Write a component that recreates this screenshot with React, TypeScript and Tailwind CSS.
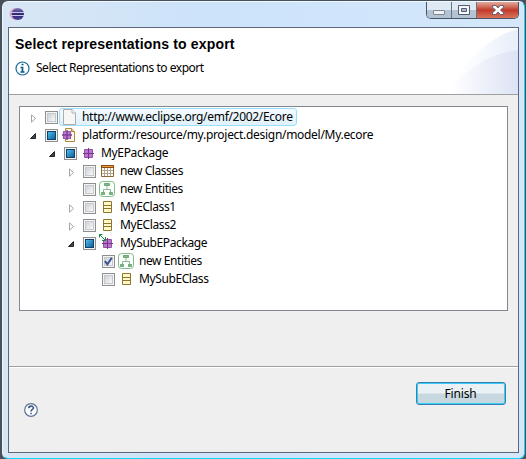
import React from "react";

type Kind = "file" | "model" | "package" | "table" | "diagram" | "class" | "subpackage";
type Check = "off" | "on" | "mixed";
type Arrow = "closed" | "open" | "none";

interface Node {
  label: string;
  indent: string;
  arrow: Arrow;
  check: Check;
  icon: Kind;
  spacing: string;
  selected?: boolean;
}

const nodes: Node[] = [
  { label: "http://www.eclipse.org/emf/2002/Ecore", indent: "pl-[8px]", arrow: "closed", check: "off", icon: "file", spacing: "tracking-[-0.31px]", selected: true },
  { label: "platform:/resource/my.project.design/model/My.ecore", indent: "pl-[8px]", arrow: "open", check: "mixed", icon: "model", spacing: "tracking-[-0.3px]" },
  { label: "MyEPackage", indent: "pl-[27px]", arrow: "open", check: "mixed", icon: "package", spacing: "tracking-[-0.35px]" },
  { label: "new Classes", indent: "pl-[46px]", arrow: "closed", check: "off", icon: "table", spacing: "tracking-[-0.45px]" },
  { label: "new Entities", indent: "pl-[46px]", arrow: "none", check: "off", icon: "diagram", spacing: "tracking-[-0.42px]" },
  { label: "MyEClass1", indent: "pl-[46px]", arrow: "closed", check: "off", icon: "class", spacing: "tracking-[-0.42px]" },
  { label: "MyEClass2", indent: "pl-[46px]", arrow: "closed", check: "off", icon: "class", spacing: "tracking-[-0.38px]" },
  { label: "MySubEPackage", indent: "pl-[46px]", arrow: "open", check: "mixed", icon: "subpackage", spacing: "tracking-[-0.38px]" },
  { label: "new Entities", indent: "pl-[65px]", arrow: "none", check: "on", icon: "diagram", spacing: "tracking-[-0.42px]" },
  { label: "MySubEClass", indent: "pl-[65px]", arrow: "none", check: "off", icon: "class", spacing: "tracking-[-0.4px]" },
];

function Expander({ type }: { type: Arrow }) {
  return (
    <svg className="mt-[3px] h-[9px] w-[9px] shrink-0" viewBox="0 0 9 9">
      {type === "closed" && <path d="M3.5.8v7.4L7.5 4.500z" fill="#fff" stroke="#a6a6a6" />}
      {type === "open" && <path d="M2.500 6.500h5V1.500z" fill="#444" stroke="#262626" />}
    </svg>
  );
}

function CheckBox({ state }: { state: Check }) {
  return (
    <span className="mt-px ml-[8px] flex h-[13px] w-[13px] shrink-0 border border-[#8e8f8f] bg-[#f4f4f4] p-px">
      {state === "mixed" ? (
        <span className="h-[9px] w-[9px] border border-[#173f6b] bg-linear-to-br from-[#4fbdec] to-[#08639b]" />
      ) : (
        <span className="h-[9px] w-[9px] border border-[#c5c9cf] bg-linear-to-br from-[#ced2d8] to-[#f8f8f8]">
          {state === "on" && (
            <svg className="-mt-px -ml-px h-[9px] w-[9px]" viewBox="0 0 9 9">
              <path d="M1 4.200 3.400 7.300 7.800.8" fill="none" stroke="#35508f" strokeWidth="1.900" />
            </svg>
          )}
        </span>
      )}
    </span>
  );
}

function PackageShape() {
  return (
    <g>
      <path d="M5.500 0v11M0 5.500h11" stroke="#6b3583" />
      <rect x="1" y="1" width="9" height="9" rx="1" fill="#9350a9" />
      <path d="M2 2h3v3H2zM6 2h3v3H6zM2 6h3v3H2zM6 6h3v3H6z" fill="#bd74cc" />
      <path d="M5.500 0v11M0 5.500h11" stroke="#74398c" />
    </g>
  );
}

function TreeIcon({ kind }: { kind: Kind }) {
  return (
    <svg className="ml-px h-4 w-4 shrink-0 overflow-visible" viewBox="0 0 16 16">
      {kind === "file" && (
        <g stroke="#adadad">
          <path d="M2.500.5h8.500l3.500 3.500v11.500h-12z" fill="#f7f7f5" />
          <path d="M11 .5v3.500h3.500" fill="#fff" />
        </g>
      )}
      {kind === "model" && (
        <g>
          <path d="M4.500 1.500h6l3 3v10h-9z" fill="#fffbe8" stroke="#b08a3c" />
          <path d="M10.500 1.500v3h3" fill="#ead08a" stroke="#b08a3c" />
          <g transform="translate(1 3) scale(.91)"><PackageShape /></g>
        </g>
      )}
      {kind === "package" && <g transform="translate(3 3)"><PackageShape /></g>}
      {kind === "subpackage" && (
        <g>
          <g transform="translate(3 3)"><PackageShape /></g>
          <path d="M2.500 1.500h4v4h-4z" fill="#f4fff4" />
          <path d="M.5 2.500V-.5h3M.5-.5l6 6M6.500 2v3.500H3" fill="none" stroke="#16863e" />
        </g>
      )}
      {kind === "table" && (
        <g>
          <path d="M2.500 3.500h12v10h-12z" fill="#fff" stroke="#8c6b36" />
          <path d="M2 2h13v3H2z" fill="#8f4a12" />
          <path d="M3 3.500h11" stroke="#e8a03c" />
          <path d="M5.500 5v8M8.500 5v8M11.500 5v8M3 7.500h11M3 10.500h11" stroke="#b5a487" />
        </g>
      )}
      {kind === "diagram" && (
        <g>
          <rect x=".5" y=".5" width="15" height="15" rx="3" fill="#fbfffb" stroke="#82bd8d" />
          <path d="M8 5v3.500M4.500 11V8.500h7V11" fill="none" stroke="#8fb595" />
          <path d="M5.500 2.500h5v2h-5zM2.500 11.500h3v2h-3zM10.500 11.500h3v2h-3z" fill="#7fb987" stroke="#6fa777" />
        </g>
      )}
      {kind === "class" && (
        <g stroke="#8f762f">
          <path d="M4.500 2.500h8v11h-8z" fill="#fff8c9" />
          <path d="M4.500 6.500h8M4.500 9.500h8" />
        </g>
      )}
    </svg>
  );
}

function TreeRow({ node }: { node: Node }) {
  return (
    <div className={`flex h-[18px] items-center ${node.indent}`}>
      <Expander type={node.arrow} />
      <CheckBox state={node.check} />
      <div className={`ml-px flex h-[18px] items-center rounded-[3px] border ${node.selected ? "w-[238px] border-[#99dffa] bg-linear-to-b from-[#f4fbff] to-[#dff1fc]" : "border-transparent"}`}>
        <TreeIcon kind={node.icon} />
        <span className={`ml-[5px] text-[12px] leading-4 whitespace-nowrap ${node.spacing}`}>{node.label}</span>
      </div>
    </div>
  );
}

function TitleBar() {
  return (
    <div className="flex h-[26px] items-start justify-between pr-[5px] pl-px">
      <svg className="mt-[4px] h-4 w-4" viewBox="0 0 16 16">
        <defs>
          <linearGradient id="orb" x2="0" y2="1"><stop stopColor="#8276bd" /><stop offset=".5" stopColor="#302571" /><stop offset="1" stopColor="#4c459b" /></linearGradient>
        </defs>
        <ellipse cx="7" cy="8" rx="6.500" ry="6" fill="#dba9c2" />
        <ellipse cx="8.800" cy="8" rx="6.200" ry="6" fill="url(#orb)" />
        <path d="M2 6.500h13M2 9.500h13" stroke="#c9c8e6" />
      </svg>
      <div className="flex h-[17px] overflow-hidden rounded-b-[5px] border border-t-0 border-[#485568]">
        <div className="flex w-[25px] items-center justify-center border-r border-[#667486] bg-linear-to-b from-[#dfe9f4] from-50% to-[#b4c3d3] to-50%">
          <span className="mt-[5px] h-[5px] w-[12px] rounded-[1px] border border-[#7d8592] bg-[#f2f2f2]" />
        </div>
        <div className="flex w-[25px] items-center justify-center border-r border-[#667486] bg-linear-to-b from-[#dfe9f4] from-50% to-[#b4c3d3] to-50%">
          <svg className="h-[10px] w-[12px]" viewBox="0 0 12 10">
            <path d="M.5.5h11v9H.5z" fill="#f8f8f8" stroke="#505b70" />
            <path d="M3.500 3.500h5v3h-5z" fill="#adbdcf" stroke="#505b70" />
          </svg>
        </div>
        <div className="flex w-[41px] items-center justify-center bg-linear-to-b from-[#e2ab9f] via-[#c0392a] via-50% to-[#d9745a]">
          <svg className="h-[10px] w-[12px]" viewBox="0 0 12 11" preserveAspectRatio="none">
            <path d="M.5.5h3.200L6 3.200 8.300.5h3.200v2L8.500 5.500l3 3v2H8.300L6 7.800 3.700 10.500H.5v-2l3-3-3-3z" fill="#fff" stroke="#565b6c" />
          </svg>
        </div>
      </div>
    </div>
  );
}

function HeaderBackdrop() {
  return (
    <svg className="absolute top-0 right-0 h-[66px] w-[75px]" viewBox="0 0 75 66">
      <defs>
        <linearGradient id="outer"><stop offset=".1" stopColor="#fff" /><stop offset=".45" stopColor="#f8fafd" /><stop offset="1" stopColor="#e8edf9" /></linearGradient>
        <linearGradient id="inner"><stop offset=".05" stopColor="#fff" /><stop offset="1" stopColor="#dce3f5" /></linearGradient>
      </defs>
      <path d="M4 66C18 38 45 8 75 1v65z" fill="url(#outer)" />
      <path d="M4 66C22 40 48 25 75 22v44z" fill="url(#inner)" />
    </svg>
  );
}

export default function App() {
  return (
    <div className="h-[459px] w-[526px] overflow-hidden bg-[#48515b] pt-px pr-px pl-[2px] font-['Noto_Sans','Open_Sans',sans-serif] text-black">
      <div className="h-[458px] w-[523px] overflow-hidden rounded-[6px] border border-t-[#edf8ff] border-r-[#19d5f5] border-b-[#19d5f5] border-l-[#e9f7ff] bg-linear-to-r from-[#d8e6f4] via-[#cce3fa] via-40% to-[#d5e8fb] pl-[5px]">
        <TitleBar />
        <div className="-mt-px flex h-[426px] w-[511px] flex-col border border-[#5c6878] bg-[#efefef]">
          <header className="relative h-[67px] shrink-0 border-b border-[#a0a0a0] bg-white">
            <HeaderBackdrop />
            <div className="relative pt-[6px] pl-[6px]">
              <h1 className="h-[21px] font-['Liberation_Sans',Arial,sans-serif] text-[14px] leading-[21px] font-bold tracking-[0.180px] whitespace-nowrap">Select representations to export</h1>
              <div className="mt-[5px] flex items-center">
                <svg className="h-[15px] w-[15px]" viewBox="0 0 15 15">
                  <circle cx="7.500" cy="7.500" r="6.500" fill="#fff" stroke="#14699f" strokeWidth="1.200" />
                  <path d="M6.500 3.500h2M5.500 6.500h2v4M5.500 11h4" fill="none" stroke="#07578e" strokeWidth="1.700" />
                </svg>
                <p className="ml-[6px] text-[12px] leading-4 tracking-[-0.480px] whitespace-nowrap">Select Representations to export</p>
              </div>
            </div>
          </header>
          <main className="h-[271px] shrink-0 pt-[11px] pl-[10px]">
            <div className="h-[205px] w-[489px] border border-[#828790] bg-white pt-px">
              {nodes.map((node, i) => <TreeRow key={i} node={node} />)}
            </div>
          </main>
          <footer className="flex flex-1 items-start justify-between border-t border-[#a0a0a0] pt-[15px] pr-[12px] pl-[15px] shadow-[inset_0_1px_0_#fff]">
            <svg className="mt-[21px] h-[15px] w-[15px]" viewBox="0 0 15 15">
              <circle cx="7" cy="7" r="6.300" fill="#fff" stroke="#5c7196" strokeWidth="1.200" />
              <path d="M4.700 5.300C4.700 2.400 9.500 2.400 9.500 5 9.500 6.500 7 6.400 7 8.500M7 9.700v1.600" fill="none" stroke="#405a87" strokeWidth="1.600" />
            </svg>
            <button className="h-[23px] w-[90px] rounded-[3px] border border-[#3c7fb1] bg-linear-to-b from-[#e9f1f5] from-48% to-[#c8d8e0] to-52% pr-px text-[12px] leading-[20px] tracking-[-0.200px] shadow-[inset_0_0_0_1px_#35cef5]">Finish</button>
          </footer>
        </div>
      </div>
    </div>
  );
}
